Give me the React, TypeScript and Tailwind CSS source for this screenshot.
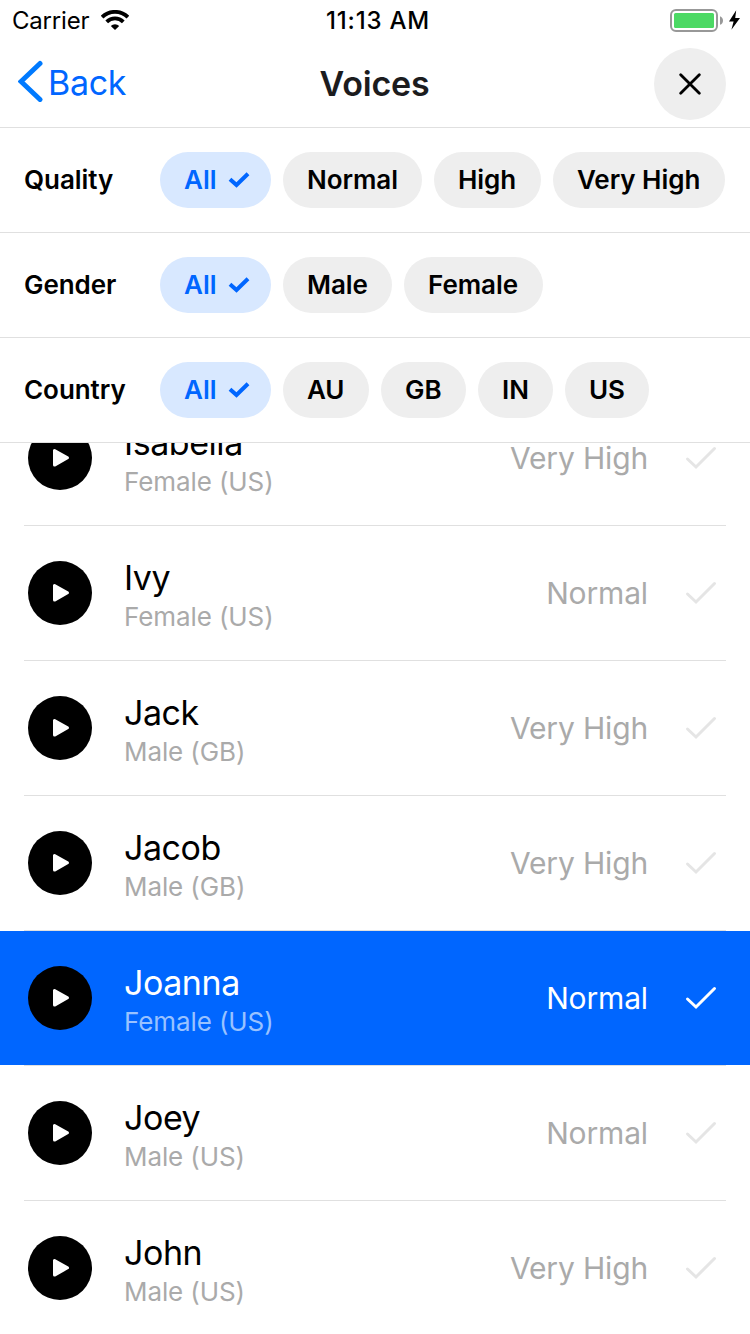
type Voice = {
  name: string;
  detail: string;
  quality: string;
  selected?: boolean;
};

const voices: Voice[] = [
  { name: "Isabella", detail: "Female (US)", quality: "Very High" },
  { name: "Ivy", detail: "Female (US)", quality: "Normal" },
  { name: "Jack", detail: "Male (GB)", quality: "Very High" },
  { name: "Jacob", detail: "Male (GB)", quality: "Very High" },
  { name: "Joanna", detail: "Female (US)", quality: "Normal", selected: true },
  { name: "Joey", detail: "Male (US)", quality: "Normal" },
  { name: "John", detail: "Male (US)", quality: "Very High" },
];

const filters = [
  {
    label: "Quality",
    options: [
      { text: "Normal", width: "w-[139px]" },
      { text: "High", width: "w-[107px]" },
      { text: "Very High", width: "w-[172px]" },
    ],
  },
  {
    label: "Gender",
    options: [
      { text: "Male", width: "w-[109px]" },
      { text: "Female", width: "w-[139px]" },
    ],
  },
  {
    label: "Country",
    options: [
      { text: "AU", width: "w-[86px]" },
      { text: "GB", width: "w-[85px]" },
      { text: "IN", width: "w-[75px]" },
      { text: "US", width: "w-[84px]" },
    ],
  },
];

function StatusBar() {
  return (
    <div className="grid h-10 shrink-0 grid-cols-[1fr_auto_1fr] items-center pl-3 pr-2.5 pt-0.5 text-black">
      <div className="flex items-center">
        <span className="w-[89px] text-2xl leading-[38px] tracking-[-0.2px]">Carrier</span>
        <svg width="28" height="20" viewBox="0 0 28 20" fill="none" stroke="#000" className="-mt-0.5">
          <path d="M1.1 6.5a18.4 18.4 0 0 1 25.8 0" strokeWidth="3.8" transform="translate(0 .6)" />
          <path d="M5.7 11.2a11.8 11.8 0 0 1 16.6 0" strokeWidth="3.8" transform="translate(0 .6)" />
          <path d="M9.8 16a6 6 0 0 1 8.4 0L14 20z" fill="#000" stroke="none" />
        </svg>
      </div>
      <span className="translate-x-[2px] text-2xl font-[550] leading-[38px] tracking-[0.8px]">11:13 AM</span>
      <div className="flex items-center justify-end">
        <svg width="70" height="24" viewBox="0 0 70 24">
          <rect x="1" y="1" width="46" height="21" rx="5" fill="#fff" stroke="#989898" strokeWidth="2" />
          <rect x="4" y="4" width="40" height="15" rx="1.5" fill="#4cd964" />
          <path d="M50 7.2c4 1.2 4 7.4 0 8.6z" fill="#989898" />
          <path d="M66.2 1.2 59 12.4h4.6L61.4 20.8 70 9h-4.8z" fill="#000" />
        </svg>
      </div>
    </div>
  );
}

function NavBar() {
  return (
    <header className="grid h-[88px] shrink-0 grid-cols-[1fr_auto_1fr] items-center border-b border-[#e0e0e0] pl-[18px] pr-6">
      <button className="flex items-center gap-[5px] pb-0.5">
        <svg width="25" height="42" viewBox="0 0 25 42" fill="none" className="-mt-1">
          <path d="M22 3 3 21l19 18" transform="translate(0 .5)" stroke="#007aff" strokeWidth="5" strokeLinecap="round" />
        </svg>
        <span className="text-[34px] leading-10 tracking-[-0.3px] text-[#0066ff]">Back</span>
      </button>
      <h1 className="translate-x-[2.5px] text-[34px] font-semibold leading-10 tracking-[-0.2px] text-[#1c1c1e]">Voices</h1>
      <button className="flex size-[72px] items-center justify-center justify-self-end rounded-full bg-[#eeeeee]" aria-label="Close">
        <svg width="22" height="22" viewBox="0 0 22 22" stroke="#000" strokeWidth="2.8" strokeLinecap="round">
          <path d="M1.7 1.7 20.3 20.3M20.3 1.7 1.7 20.3" />
        </svg>
      </button>
    </header>
  );
}

function FilterRow({ label, options }: (typeof filters)[number]) {
  return (
    <div className="flex h-[105px] shrink-0 items-center border-b border-[#e0e0e0] pl-6 text-[26px] font-semibold tracking-[-0.05px] text-black">
      <span className="w-[136px] pb-0.5">{label}</span>
      <div className="flex gap-3">
        <button className="flex h-14 w-[111px] items-center gap-[11px] rounded-full bg-[#d8e8ff] pl-6 text-[#0066ff]">
          <span className="pb-0.5 tracking-normal">All</span>
          <svg width="22" height="18" viewBox="0 0 22 18" fill="none" stroke="#0066ff" strokeWidth="4">
            <path d="M2 8.2 8.5 14 20 2.8" />
          </svg>
        </button>
        {options.map((o) => (
          <button key={o.text} className={`flex h-14 items-center whitespace-nowrap rounded-full bg-[#eeeeee] pb-0.5 pl-6 ${o.width}`}>
            {o.text}
          </button>
        ))}
      </div>
    </div>
  );
}

function VoiceRow({ name, detail, quality, selected }: Voice) {
  return (
    <li className="shrink-0">
      <div className={`flex h-[134px] items-center pl-7 pr-[33px] ${selected ? "bg-[#0066ff] text-white" : "text-black"}`}>
        <button className="flex size-16 items-center justify-center rounded-full bg-black" aria-label="Play">
          <svg width="18" height="20" viewBox="0 0 18 20" className="mb-px ml-0.5">
            <path d="M2.5 2.5v14.6L15.5 9.8z" fill="#fff" stroke="#fff" strokeWidth="3" strokeLinejoin="round" />
          </svg>
        </button>
        <div className="ml-8 flex flex-1 flex-col pt-1.5">
          <span className="text-[34px] leading-[42px] tracking-[-0.45px]">{name}</span>
          <span className={`text-[26px] leading-9 tracking-[-0.1px] ${selected ? "text-[#99c2ff]" : "text-[#aaaaaa]"}`}>{detail}</span>
        </div>
        <span className={`text-[30px] tracking-[-0.15px] ${selected ? "text-white" : "text-[#aaaaaa]"}`}>{quality}</span>
        <svg width="32" height="24" viewBox="0 0 32 24" fill="none" stroke={selected ? "#fff" : "#e5e5e5"} strokeWidth="3" strokeLinecap="round" className="ml-[37px]">
          <path d="M2.5 13 11 21 29.5 2.5" />
        </svg>
      </div>
      <div className="mx-6 h-px bg-[#e0e0e0]" />
    </li>
  );
}

export default function App() {
  return (
    <div className="flex h-[1334px] w-[750px] flex-col overflow-hidden bg-white font-['Inter',sans-serif]">
      <StatusBar />
      <NavBar />
      {filters.map((f) => (
        <FilterRow key={f.label} {...f} />
      ))}
      <div className="min-h-0 flex-1 overflow-hidden">
        <ul className="-mt-[52px] flex flex-col">
          {voices.map((v) => (
            <VoiceRow key={v.name} {...v} />
          ))}
        </ul>
      </div>
    </div>
  );
}
